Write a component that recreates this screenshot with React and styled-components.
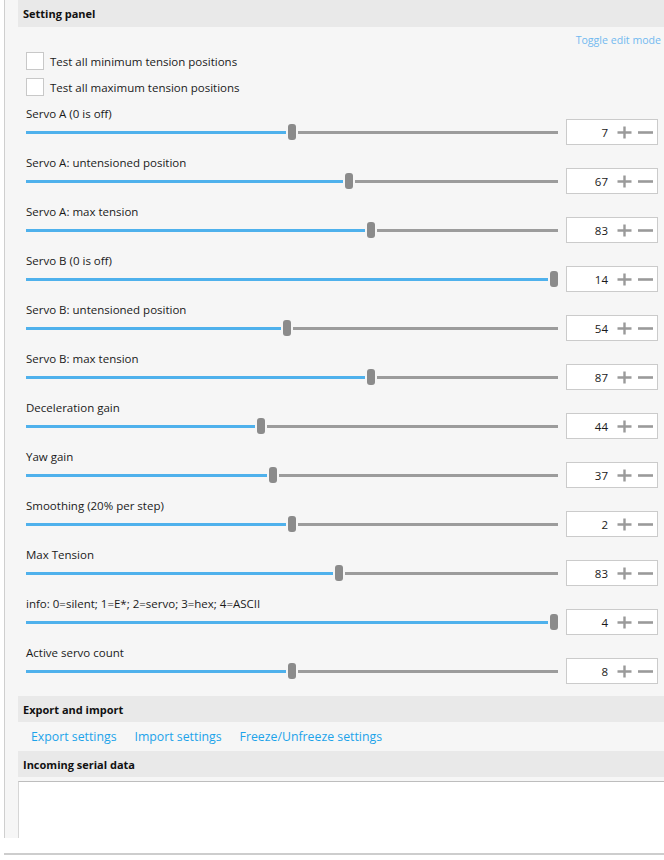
import React from 'react';
import styled, { createGlobalStyle } from 'styled-components';

const GlobalStyle = createGlobalStyle`
  html, body {
    margin: 0;
    padding: 0;
    background: #ffffff;
    font-family: 'Open Sans', 'Noto Sans', sans-serif;
    color: #1a1a1a;
  }
`;

const Frame = styled.div`
  margin-left: 4px;
  height: 838px;
  border-left: 1px solid #cfcfcf;
  background: #f6f6f6;
  overflow: hidden;
  padding-left: 13px;
  box-sizing: border-box;
`;

const BottomRule = styled.div`
  margin: 15px 0 0 4px;
  height: 2px;
  background: #cdcdcd;
`;

const SectionHeader = styled.div`
  height: ${p => p.h || 26}px;
  background: #e9e9e9;
  display: flex;
  align-items: center;
  padding-left: 5px;
  font-size: 11px;
  font-weight: 700;
  color: #111;
`;

const Body = styled.div`
  padding: 0 6px 0 8px;
`;

const ToggleRow = styled.div`
  display: flex;
  justify-content: flex-end;
  margin: 5px -3px 0 0;
  height: 16px;
  align-items: center;
  font-size: 10.6px;
  color: #72b9f0;
`;

const CheckRow = styled.label`
  display: flex;
  align-items: center;
  gap: 6px;
  height: 26px;
  font-size: 11.5px;
`;

const CheckBox = styled.span`
  width: 16px;
  height: 16px;
  background: #fff;
  border: 1px solid #c8c8c8;
`;

const SettingList = styled.div`
  display: flex;
  flex-direction: column;
  gap: 9px;
  margin-top: 5px;
`;

const Setting = styled.div`
  display: flex;
  flex-direction: column;
`;

const Label = styled.div`
  font-size: 11.5px;
  line-height: 17px;
  height: 14px;
`;

const SliderRow = styled.div`
  display: flex;
  align-items: center;
  gap: 8px;
  height: 26px;
`;

const Track = styled.div`
  flex: 1;
  display: flex;
  align-items: center;
  height: 26px;
`;

const Fill = styled.div`
  height: 3px;
  padding-right: 2px;
  box-sizing: content-box;
  background: #4fb1ec;
  background-clip: content-box;
  flex: none;
`;

const Thumb = styled.div`
  width: 8px;
  height: 16px;
  border-radius: 3px;
  background: #8b8b8b;
  flex: none;
`;

const Rest = styled.div`
  flex: 1;
  height: 3px;
  margin-left: 2px;
  background: #9c9c9c;
`;

const NumberBox = styled.div`
  width: 92px;
  height: 26px;
  box-sizing: border-box;
  border: 1px solid #cbcbcb;
  background: #fff;
  display: flex;
  align-items: center;
  justify-content: flex-end;
  padding-right: 4px;
  font-size: 11.5px;
  flex: none;
`;

const Value = styled.span`
  margin-right: 9px;
`;

const StepIcon = styled.svg`
  width: 15px;
  height: 15px;
  display: block;
  margin-left: ${p => p.gap || 0}px;
`;

const LinkRow = styled.div`
  height: 29px;
  display: flex;
  align-items: center;
  gap: 18px;
  padding-left: 13px;
  font-size: 12.3px;
  color: #1ca3ea;
`;

const SerialBox = styled.div`
  margin-top: 4px;
  height: 90px;
  background: #fff;
  border-top: 1px solid #bdbdbd;
  border-left: 1px solid #d6d6d6;
`;

const settings = [
  { label: 'Servo A (0 is off)', value: 7, pct: 0.5 },
  { label: 'Servo A: untensioned position', value: 67, pct: 0.608 },
  { label: 'Servo A: max tension', value: 83, pct: 0.651 },
  { label: 'Servo B (0 is off)', value: 14, pct: 1 },
  { label: 'Servo B: untensioned position', value: 54, pct: 0.491 },
  { label: 'Servo B: max tension', value: 87, pct: 0.651 },
  { label: 'Deceleration gain', value: 44, pct: 0.44 },
  { label: 'Yaw gain', value: 37, pct: 0.463 },
  { label: 'Smoothing (20% per step)', value: 2, pct: 0.5 },
  { label: 'Max Tension', value: 83, pct: 0.589 },
  { label: 'info: 0=silent; 1=E*; 2=servo; 3=hex; 4=ASCII', value: 4, pct: 1 },
  { label: 'Active servo count', value: 8, pct: 0.5 },
];

const Plus = () => (
  <StepIcon viewBox="0 0 15 15">
    <path d="M0.5 7.5h14M7.5 1.5v12" stroke="#9a9a9a" strokeWidth="2.4" />
  </StepIcon>
);

const Minus = () => (
  <StepIcon viewBox="0 0 15 15" gap={6}>
    <path d="M0 7.5h15" stroke="#9a9a9a" strokeWidth="2.6" />
  </StepIcon>
);

const Slider = ({ pct }) => (
  <Track>
    <Fill style={{ width: `max(0px, calc(${pct} * (100% - 8px) - 2px))` }} />
    <Thumb />
    <Rest />
  </Track>
);

const App = () => (
  <>
    <GlobalStyle />
    <Frame>
      <SectionHeader h={27}>Setting panel</SectionHeader>
      <Body>
        <ToggleRow>Toggle edit mode</ToggleRow>
        <CheckRow><CheckBox />Test all minimum tension positions</CheckRow>
        <CheckRow><CheckBox />Test all maximum tension positions</CheckRow>
        <SettingList>
          {settings.map(s => (
            <Setting key={s.label}>
              <Label>{s.label}</Label>
              <SliderRow>
                <Slider pct={s.pct} />
                <NumberBox>
                  <Value>{s.value}</Value>
                  <Plus />
                  <Minus />
                </NumberBox>
              </SliderRow>
            </Setting>
          ))}
        </SettingList>
      </Body>
      <div style={{ height: 12 }} />
      <SectionHeader>Export and import</SectionHeader>
      <LinkRow>
        <span>Export settings</span>
        <span>Import settings</span>
        <span>Freeze/Unfreeze settings</span>
      </LinkRow>
      <SectionHeader>Incoming serial data</SectionHeader>
      <SerialBox />
    </Frame>
    <BottomRule />
  </>
);

export default App;
